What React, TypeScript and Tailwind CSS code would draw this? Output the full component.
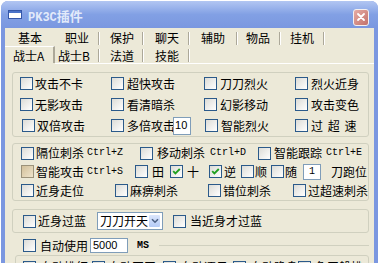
import React from "react";

const CJK = "font-['Noto_Sans_CJK_SC','Noto_Sans',sans-serif]";
const MONO = "font-['Liberation_Mono',monospace]";

function Box({ checked = false, tan = false }: { checked?: boolean; tan?: boolean }) {
  return (
    <span
      className={
        tan
          ? "relative block h-[13px] w-[13px] shrink-0 border border-[#9b927a] bg-linear-to-br from-[#d2c09a] to-[#efe4cc]"
          : "relative block h-[13px] w-[13px] shrink-0 border border-[#2b5a8a] bg-linear-to-br from-[#dcdcd7] to-white"
      }
    >
      {checked && (
        <svg className="block" width="11" height="11" viewBox="0 0 11 11">
          <path d="M2.2 5.2 L4.4 7.4 L8.8 3" fill="none" stroke="#21a121" strokeWidth="1.9" />
        </svg>
      )}
    </span>
  );
}

function Chk({
  label,
  className = "",
  gap = "gap-[2px]",
  checked,
  tan,
  keys,
}: {
  label: string;
  className?: string;
  gap?: string;
  checked?: boolean;
  tan?: boolean;
  keys?: string;
}) {
  return (
    <div className={`flex shrink-0 items-center ${gap} ${className}`}>
      <Box checked={checked} tan={tan} />
      <span className="whitespace-nowrap text-[12px] leading-[14px]">{label}</span>
      {keys && <span className={`${MONO} ml-[1px] text-[10px] leading-[14px]`}>{keys}</span>}
    </div>
  );
}

function Sep() {
  return <span className="block h-[13px] w-[2px] shrink-0 border-l border-r border-l-[#aca899] border-r-white" />;
}

function Tab({ label, className, sep = true }: { label: string; className: string; sep?: boolean }) {
  return (
    <div className={`flex shrink-0 items-center justify-between ${className}`}>
      <span className="whitespace-nowrap text-[12px] leading-[14px]">{label}</span>
      {sep && <Sep />}
    </div>
  );
}

export default function App() {
  return (
    <div className={`h-[263px] w-[378px] overflow-hidden bg-white text-black ${CJK}`}>
      <div className="ml-[1px] mt-[1px] flex h-[320px] w-[377px] flex-col overflow-hidden rounded-t-[7px] bg-[#7b97e0]">
        {/* title bar */}
        <div className="flex h-[27px] shrink-0 items-center bg-linear-to-b from-[#b2c6f2] via-[#82a0e4] to-[#7a97e0] pl-[7px] pr-[9px]">
          <svg width="14" height="9" viewBox="0 0 14 9" className="block">
            <rect x="0.5" y="0.5" width="13" height="8" fill="#fff" stroke="#3557a8" />
            <rect x="1" y="1" width="12" height="2" fill="#4a72c8" />
          </svg>
          <span className="ml-[6px] whitespace-nowrap font-bold leading-none text-[#e2eafa]">
            <span className={`${MONO} text-[12px]`}>PK3C</span>
            <span className="text-[13px]">插件</span>
          </span>
          <div className="flex-1" />
          <div className="mt-[5px] flex h-[17px] w-[16px] items-center justify-center rounded-[3px] border border-[#f4f0f0] bg-linear-to-br from-[#e6aca4] to-[#c2716b]">
            <svg width="10" height="10" viewBox="0 0 10 10">
              <path d="M2 2 L8 8 M8 2 L2 8" stroke="#fff" strokeWidth="1.8" strokeLinecap="round" />
            </svg>
          </div>
        </div>

        {/* client area */}
        <div className="mx-[4px] flex-1 bg-[#ece9d8]">
          <div className="pt-[2px]">
            <div className="flex h-[16px] pl-[2px]">
              <Tab label="基本" className="w-[48px] pl-[11px]" sep={false} />
              <Tab label="职业" className="w-[45px] pl-[10px]" />
              <Tab label="保护" className="w-[44px] pl-[10px]" />
              <Tab label="聊天" className="w-[46px] pl-[11px]" />
              <Tab label="辅助" className="w-[48px] pl-[11px]" />
              <Tab label="物品" className="w-[43px] pl-[8px]" />
              <Tab label="挂机" className="w-[44px] pl-[9px]" />
            </div>
            <div className="flex h-[17px]">
              <div className="flex w-[50px] shrink-0 items-center border-r-2 border-t border-r-[#aca899] border-t-white pl-[8px] pt-[2px]">
                <span className="whitespace-nowrap text-[12px] leading-[14px]">战士A</span>
              </div>
              <Tab label="战士B" className="w-[45px] pl-[3px] pt-[2px]" />
              <Tab label="法道" className="w-[44px] pl-[10px] pt-[2px]" />
              <Tab label="技能" className="w-[46px] pl-[11px] pt-[2px]" />
            </div>
            <div className="ml-[50px] h-[1px] bg-white" />
          </div>

          <div className="flex flex-col pl-[7px] pr-[5px] pt-[8px]">
            {/* group 1 */}
            <div className="rounded-[3px] border border-[#d0d0bf] pl-[7px]">
              <div className="flex h-[21px] items-center">
                <Chk className="w-[91px]" label="攻击不卡" />
                <Chk className="w-[93px]" label="超快攻击" gap="gap-[3px]" />
                <Chk className="w-[91px]" label="刀刀烈火" gap="gap-[3px]" />
                <Chk label="烈火近身" gap="gap-[3px]" />
              </div>
              <div className="flex h-[21px] items-center">
                <Chk className="w-[91px]" label="无影攻击" />
                <Chk className="w-[93px]" label="看清暗杀" gap="gap-[3px]" />
                <Chk className="w-[91px]" label="幻影移动" gap="gap-[3px]" />
                <Chk label="攻击变色" gap="gap-[3px]" />
              </div>
              <div className="flex h-[21px] items-center">
                <Chk className="w-[91px] pl-[2px]" label="双倍攻击" />
                <div className="flex w-[94px] shrink-0 items-center">
                  <Chk label="多倍攻击" gap="gap-[3px]" />
                  <div className="-ml-[2px] flex h-[18px] w-[18px] items-center border border-[#7f9db9] bg-white pl-[1px] font-['Liberation_Sans',sans-serif] text-[11px] leading-none">
                    10
                  </div>
                </div>
                <Chk className="w-[90px]" label="智能烈火" gap="gap-[3px]" />
                <Chk label="过 超 速" gap="gap-[3px]" className="tracking-[1px]" />
              </div>
            </div>

            {/* group 2 */}
            <div className="mt-[6px] rounded-[3px] border border-[#d0d0bf] pl-[8px]">
              <div className="flex h-[18px] items-center">
                <Chk className="w-[119px]" label="隔位刺杀" keys="Ctrl+Z" />
                <Chk className="w-[118px]" label="移动刺杀" keys="Ctrl+D" gap="gap-[4px]" />
                <Chk label="智能跟踪" keys="Ctrl+E" gap="gap-[3px]" />
              </div>
              <div className="flex h-[19px] items-center">
                <Chk className="w-[114px]" label="智能攻击" keys="Ctrl+S" tan />
                <Chk className="w-[35px]" label="田" gap="gap-[4px]" />
                <Chk className="w-[39px]" label="十" gap="gap-[4px]" checked />
                <Chk className="w-[32px]" label="逆" gap="gap-[2px]" checked />
                <Chk className="w-[30px]" label="顺" gap="gap-[1px]" />
                <Chk className="w-[32px]" label="随" gap="gap-[1px]" />
                <div className={`flex h-[16px] w-[18px] shrink-0 items-center justify-center border border-[#7f9db9] bg-white ${MONO} text-[10px] leading-none`}>
                  1
                </div>
                <span className="ml-[10px] whitespace-nowrap text-[12px] leading-[14px]">刀跑位</span>
              </div>
              <div className="flex h-[19px] items-center">
                <Chk className="w-[94px]" label="近身走位" />
                <Chk className="w-[93px]" label="麻痹刺杀" />
                <Chk className="w-[85px]" label="错位刺杀" />
                <Chk label="过超速刺杀" />
              </div>
            </div>

            {/* group 3 */}
            <div className="mt-[8px] rounded-[3px] border border-[#d0d0bf] pl-[10px]">
              <div className="flex h-[22px] items-center">
                <Chk className="w-[74px]" label="近身过蓝" />
                <div className="flex h-[18px] w-[66px] shrink-0 items-center border border-[#7f9db9] bg-white">
                  <span className="flex-1 whitespace-nowrap pl-[2px] text-[12px] leading-[14px]">刀刀开天</span>
                  <span className="mr-[1px] flex h-[14px] w-[15px] items-center justify-center rounded-[2px] border border-white bg-linear-to-b from-[#dbe6fc] to-[#b5cbf6]">
                    <svg width="8" height="6" viewBox="0 0 8 6">
                      <path d="M1 1.2 L4 4.2 L7 1.2" fill="none" stroke="#4d6185" strokeWidth="1.6" />
                    </svg>
                  </span>
                </div>
                <Chk className="ml-[10px]" label="当近身才过蓝" gap="gap-[4px]" />
              </div>
            </div>

            {/* group 4 */}
            <div className="mt-[5px] flex h-[15px] items-center pl-[11px]">
              <Chk className="w-[67px]" label="自动使用" gap="gap-[4px]" />
              <div className="flex h-[15px] w-[38px] shrink-0 items-center border border-[#7f9db9] bg-white pl-[2px] font-['Liberation_Sans',sans-serif] text-[11px] leading-none">
                5000
              </div>
              <span className={`${MONO} ml-[9px] text-[10px] font-bold leading-none`}>MS</span>
              <div className="ml-[10px] h-0 flex-1 border-t border-[#d0d0bf]" />
            </div>
            <div className="ml-[3px] mt-[2px] rounded-[3px] border border-[#d0d0bf] pl-[7px] pt-[2px]">
              <div className="flex h-[18px] items-center">
                <Chk className="w-[69px]" label="自动挑红" gap="gap-[4px]" />
                <Chk className="w-[71px]" label="自动开天" gap="gap-[3px]" />
                <Chk className="w-[70px]" label="自动逐日" gap="gap-[4px]" />
                <Chk className="w-[65px]" label="自动隐身" gap="gap-[4px]" />
                <Chk label="免干躲挑" gap="gap-[4px]" />
              </div>
            </div>
          </div>
        </div>
      </div>
    </div>
  );
}
